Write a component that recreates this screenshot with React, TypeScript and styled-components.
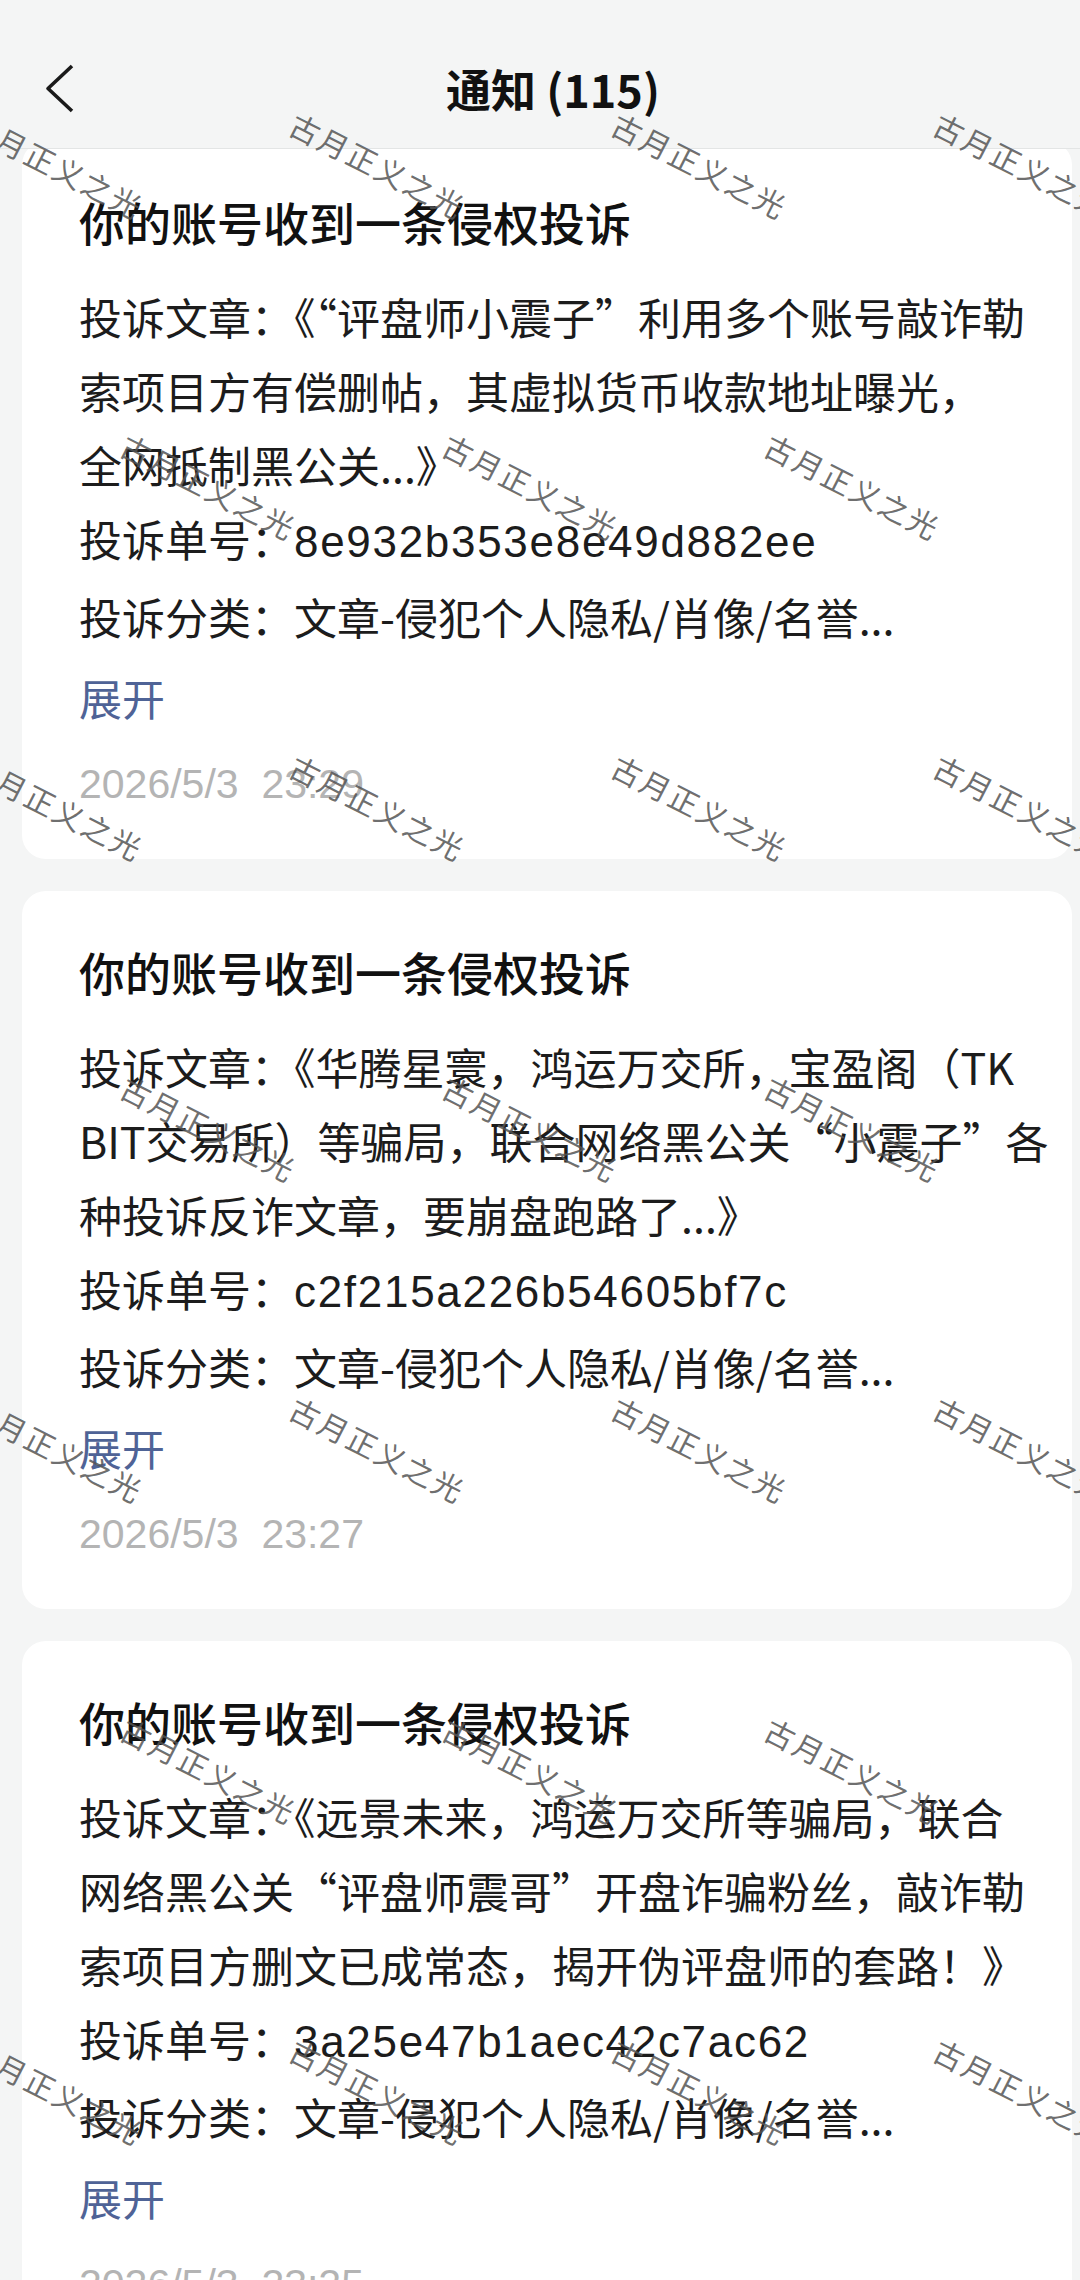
import styled, { createGlobalStyle } from "styled-components";

type Notice = {
  article: string[];
  serial: string;
  category: string;
  time: string;
};

const notices: Notice[] = [
  {
    article: [
      "投诉文章：《“评盘师小震子”利用多个账号敲诈勒",
      "索项目方有偿删帖，其虚拟货币收款地址曝光，",
      "全网抵制黑公关...》",
    ],
    serial: "8e932b353e8e49d882ee",
    category: "文章-侵犯个人隐私/肖像/名誉...",
    time: "2026/5/3  23:29",
  },
  {
    article: [
      "投诉文章：《华腾星寰，鸿运万交所，宝盈阁（TK",
      "BIT交易所）等骗局，联合网络黑公关“小震子”各",
      "种投诉反诈文章，要崩盘跑路了...》",
    ],
    serial: "c2f215a226b54605bf7c",
    category: "文章-侵犯个人隐私/肖像/名誉...",
    time: "2026/5/3  23:27",
  },
  {
    article: [
      "投诉文章：《远景未来，鸿运万交所等骗局，联合",
      "网络黑公关“评盘师震哥”开盘诈骗粉丝，敲诈勒",
      "索项目方删文已成常态，揭开伪评盘师的套路！》",
    ],
    serial: "3a25e47b1aec42c7ac62",
    category: "文章-侵犯个人隐私/肖像/名誉...",
    time: "2026/5/3  23:25",
  },
];

// watermark lattice, rows alternate between 4 and 3 marks
const marks = Array.from({ length: 8 }).flatMap((_, r) => {
  const y = 165 + r * 321;
  const xs = r % 2 === 0 ? [56, 378, 700, 1022] : [209, 531, 853];
  return xs.map((x) => ({ x, y }));
});

export default function App() {
  return (
    <>
      <GlobalStyle />
      <Page>
        <Header>
          <BackButton aria-label="返回">
            <svg width="30" height="50" viewBox="0 0 30 50">
              <polyline
                points="27,2 3,24.5 27,47"
                fill="none"
                stroke="#1a1a1a"
                strokeWidth="3.6"
                strokeLinejoin="round"
              />
            </svg>
          </BackButton>
          <HeaderTitle>通知 (115)</HeaderTitle>
        </Header>
        <NoticeList>
          {notices.map((n) => (
            <NoticeCard key={n.serial}>
              <CardTitle>你的账号收到一条侵权投诉</CardTitle>
              <CardBody>
                {n.article.map((line) => (
                  <BodyLine key={line}>{line}</BodyLine>
                ))}
                <BodyLine>
                  投诉单号：<Serial>{n.serial}</Serial>
                </BodyLine>
                <BodyLine>投诉分类：{n.category}</BodyLine>
              </CardBody>
              <ExpandLink>展开</ExpandLink>
              <TimeStamp>{n.time}</TimeStamp>
            </NoticeCard>
          ))}
        </NoticeList>
        <WatermarkLayer>
          {marks.map((m) => (
            <Watermark key={`${m.x}-${m.y}`} $x={m.x} $y={m.y}>
              古月正义之光
            </Watermark>
          ))}
        </WatermarkLayer>
      </Page>
    </>
  );
}

const GlobalStyle = createGlobalStyle`
  * {
    box-sizing: border-box;
  }
  html, body {
    margin: 0;
    padding: 0;
  }
  body {
    background: #f4f5f5;
    font-family: "Noto Sans CJK SC", "Liberation Sans", sans-serif;
    -webkit-font-smoothing: antialiased;
  }
`;

const Page = styled.div`
  position: relative;
  width: 1080px;
  height: 2280px;
  overflow: hidden;
  background: #f4f5f5;
`;

const Header = styled.header`
  position: relative;
  z-index: 2;
  height: 149px;
  padding: 30px 19px 0 45px;
  display: grid;
  grid-template-columns: 1fr auto 1fr;
  align-items: center;
  background: #f4f5f5;
  border-bottom: 1px solid #e3e5e5;
`;

const BackButton = styled.div`
  display: flex;
  align-items: center;
  justify-self: start;
`;

const HeaderTitle = styled.h1`
  margin: 0;
  font-size: 45px;
  line-height: 64px;
  font-weight: 700;
  color: #111;
`;

const NoticeList = styled.main`
  position: relative;
  z-index: 1;
  margin-top: -8px;
  padding: 0 8px 0 22px;
  display: flex;
  flex-direction: column;
  gap: 32px;
`;

const NoticeCard = styled.section`
  background: #fff;
  border-radius: 24px;
  padding: 48px 20px 47px 57px;
`;

const CardTitle = styled.h2`
  margin: 0;
  font-size: 46px;
  line-height: 64px;
  font-weight: 500;
  color: #111;
`;

const CardBody = styled.div`
  margin-top: 26px;
  font-size: 43px;
  line-height: 74px;
  color: #1c1c1c;
`;

const BodyLine = styled.div`
  white-space: nowrap;
`;

const Serial = styled.span`
  font-family: "Liberation Sans", sans-serif;
  font-size: 44px;
  letter-spacing: 1.7px;
`;

const ExpandLink = styled.div`
  margin-top: 7px;
  font-size: 43px;
  line-height: 74px;
  color: #4f6396;
`;

const TimeStamp = styled.div`
  margin-top: 22px;
  font-family: "Liberation Sans", sans-serif;
  font-size: 41px;
  line-height: 56px;
  color: #b4b4b4;
  white-space: pre;
`;

const WatermarkLayer = styled.div`
  position: absolute;
  inset: 0;
  z-index: 3;
  pointer-events: none;
  overflow: hidden;
`;

const Watermark = styled.span<{ $x: number; $y: number }>`
  position: absolute;
  left: ${({ $x }) => $x}px;
  top: ${({ $y }) => $y}px;
  transform: translate(-50%, -50%) rotate(27deg);
  font-size: 30px;
  letter-spacing: 2px;
  color: rgba(85, 85, 85, 0.85);
  white-space: nowrap;
`;
